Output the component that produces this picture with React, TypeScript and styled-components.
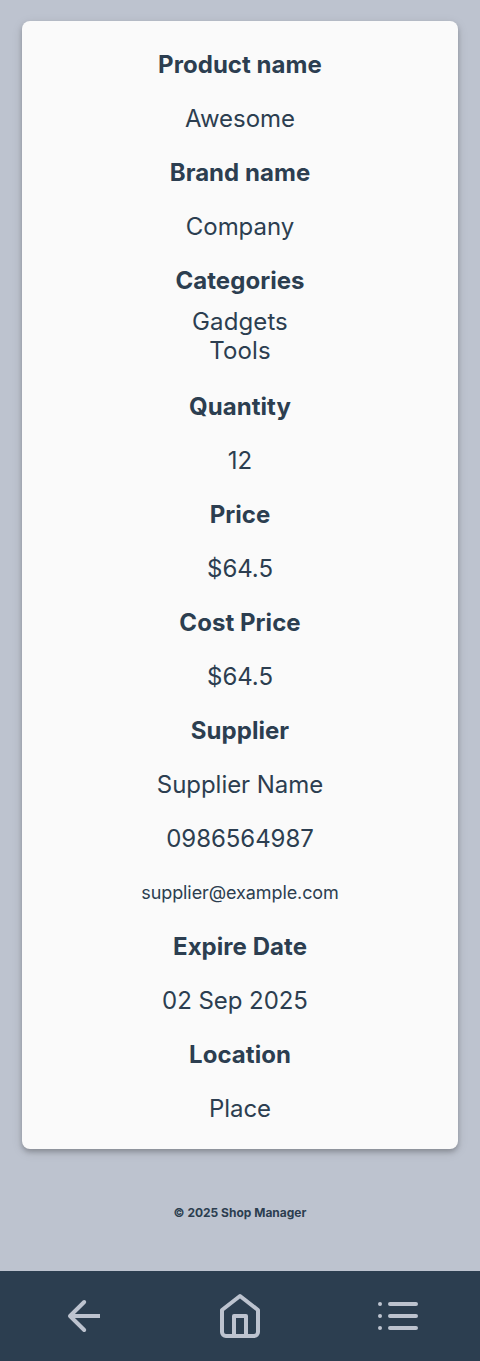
import React from 'react';
import styled, { createGlobalStyle } from 'styled-components';

const GlobalStyle = createGlobalStyle`
  * { box-sizing: border-box; }
  body {
    margin: 0;
    background: #bdc3cf;
    color: #2c3e50;
    font-family: Inter, "Liberation Sans", sans-serif;
    font-size: 24px;
    line-height: 29px;
  }
`;

const Page = styled.div`
  min-height: 1361px;
  display: flex;
  flex-direction: column;
`;

const Card = styled.main`
  margin: 21px 22px 0;
  height: 1128px;
  padding-top: 29px;
  border-radius: 8px;
  background: #fafafa;
  box-shadow: 0 3px 5px rgba(0, 0, 0, 0.22), 0 3px 12px rgba(0, 0, 0, 0.1);
  display: flex;
  flex-direction: column;
  align-items: center;
  gap: 25px;
`;

const Label = styled.h2`
  margin: 0;
  font-size: 24px;
  font-weight: 700;
  letter-spacing: 0.05px;
`;

const Value = styled.p<{ $small?: boolean; $trailing?: number }>`
  margin: 0;
  padding-right: ${({ $trailing = 0 }) => $trailing}px;
  font-size: ${({ $small }) => ($small ? 18 : 24)}px;
  font-weight: 400;
  letter-spacing: ${({ $small }) => ($small ? -0.09 : -0.05)}px;
`;

const CategoryList = styled.ul`
  list-style: none;
  margin: -13px 0 2px;
  padding: 0;
  text-align: center;
  letter-spacing: 0.1px;
`;

const Footer = styled.footer`
  flex: 1;
  padding-top: 56px;
  text-align: center;
  font-size: 12px;
  font-weight: 700;
  line-height: 15px;
`;

const NavBar = styled.nav`
  height: 90px;
  padding: 0 58px;
  display: flex;
  align-items: center;
  justify-content: space-between;
  background: #2c3e50;
`;

const NavButton = styled.button`
  display: flex;
  padding: 0;
  border: 0;
  background: none;
  color: #bdc3cf;
`;

const Icon = styled.svg`
  width: 48px;
  height: 48px;
  fill: none;
  stroke: currentColor;
`;

export default function App() {
  return (
    <>
      <GlobalStyle />
      <Page>
        <Card>
          <Label>Product name</Label>
          <Value>Awesome</Value>
          <Label>Brand name</Label>
          <Value>Company</Value>
          <Label>Categories</Label>
          <CategoryList>
            <li>Gadgets</li>
            <li>Tools</li>
          </CategoryList>
          <Label>Quantity</Label>
          <Value>12</Value>
          <Label>Price</Label>
          <Value>$64.5</Value>
          <Label>Cost Price</Label>
          <Value>$64.5</Value>
          <Label>Supplier</Label>
          <Value>Supplier Name</Value>
          <Value>0986564987</Value>
          <Value $small>supplier@example.com</Value>
          <Label>Expire Date</Label>
          <Value $trailing={10}>02 Sep 2025</Value>
          <Label>Location</Label>
          <Value>Place</Value>
        </Card>
        <Footer>© 2025 Shop Manager</Footer>
        <NavBar>
          <NavButton aria-label="Back">
            <Icon viewBox="0 0 48 48" strokeWidth="4" strokeLinejoin="round">
              <path d="M42 24H12" />
              <path d="M26.2 10L12 24l14.2 14" strokeLinecap="round" />
            </Icon>
          </NavButton>
          <NavButton aria-label="Home">
            <Icon viewBox="0 0 48 48" strokeWidth="4" strokeLinecap="round" strokeLinejoin="round">
              <path d="M6 18L24 4l18 14v22a4 4 0 0 1-4 4H10a4 4 0 0 1-4-4Z" />
              <path d="M18 44V24h12v20" />
            </Icon>
          </NavButton>
          <NavButton aria-label="List">
            <Icon viewBox="0 0 48 48" strokeWidth="4" strokeLinecap="round">
              <path d="M16 12h26M16 24h26M16 36h26M6 12h.02M6 24h.02M6 36h.02" />
            </Icon>
          </NavButton>
        </NavBar>
      </Page>
    </>
  );
}
